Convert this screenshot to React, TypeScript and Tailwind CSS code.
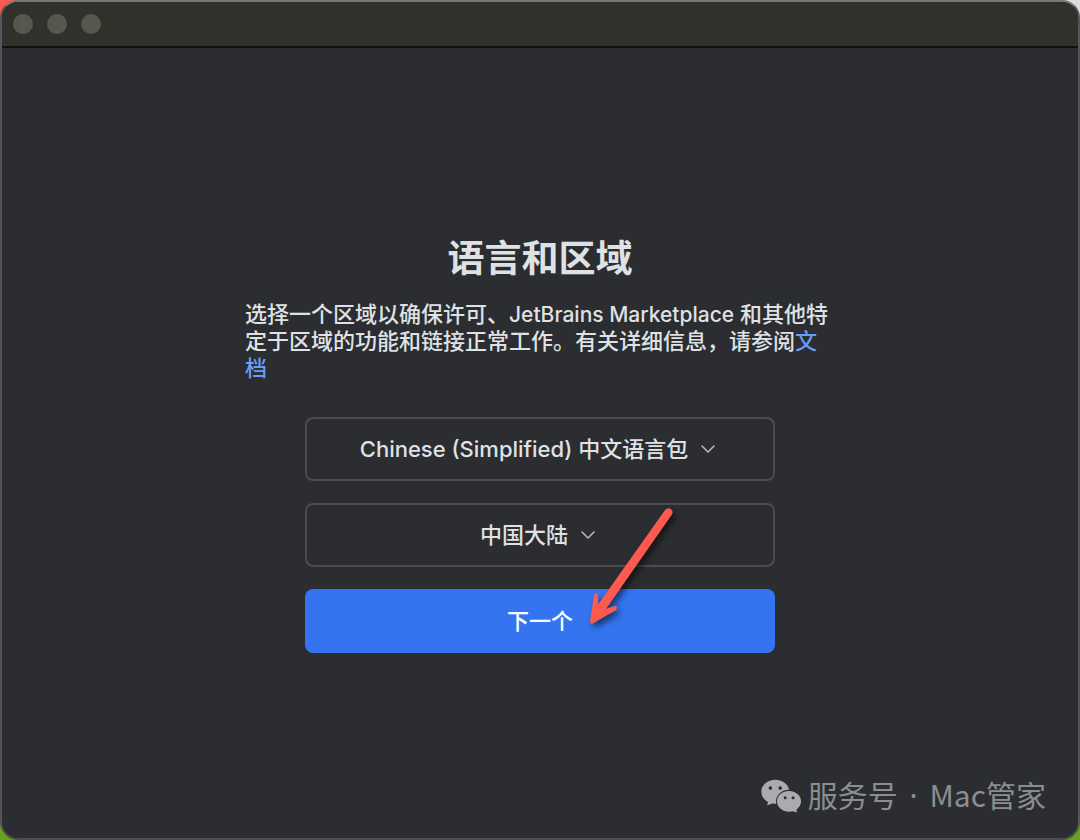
import React, { useState } from 'react';

type PickerProps = {
  id: string;
  label: string;
  options: string[];
};

const Picker: React.FC<PickerProps> = ({ id, label, options }) => {
  const [value, setValue] = useState(options[0]);

  return (
    <div className="flex h-16 w-full items-center justify-center gap-3 rounded-lg border-2 border-[#4b4c50] pr-1">
      <select
        id={id}
        aria-label={label}
        value={value}
        onChange={(e) => setValue(e.target.value)}
        className="appearance-none field-sizing-content bg-transparent leading-9 text-[#dfe1e5] outline-none cursor-pointer"
      >
        {options.map((option) => (
          <option key={option} className="bg-[#2b2d30]">{option}</option>
        ))}
      </select>
      <svg viewBox="0 0 16 16" className="size-4 shrink-0" fill="none" stroke="#b6b8bd" strokeWidth="1.6" strokeLinecap="round" strokeLinejoin="round" aria-hidden="true">
        <path d="M2 5l6 6 6-6" />
      </svg>
    </div>
  );
};

const TitleBar: React.FC = () => (
  <header className="flex h-[46px] shrink-0 items-center gap-[14px] border-b-2 border-[#0f0f10] bg-[#32302b] px-[11px]">
    <button aria-label="关闭" className="size-5 rounded-full bg-[#57564f]" />
    <button aria-label="最小化" className="size-5 rounded-full bg-[#57564f]" />
    <button aria-label="缩放" className="size-5 rounded-full bg-[#57564f]" />
  </header>
);

// Pointer arrow that lies over the form
const Pointer: React.FC = () => (
  <svg viewBox="0 0 100 130" className="pointer-events-none absolute bottom-[19px] left-[275px] h-[130px] w-[100px] overflow-visible drop-shadow-[3px_4px_3px_rgba(0,0,0,0.55)]" aria-hidden="true">
    <path
      d="M84.9 6.2 Q87.6 3 90.8 5 Q94 7.6 91.6 11 L26.2 104.8 L33.6 102.3 Q36.4 101.6 37 103.6 Q37.3 105.3 35.3 106.4 L12.8 119.4 Q9.8 120.4 10 117 L14 91.4 Q14.5 89.2 16.2 89.3 Q18.1 89.5 18.1 91.8 L18.3 100.3 Z"
      fill="#ff5a4d"
    />
  </svg>
);

const WeChatIcon: React.FC = () => (
  <svg viewBox="0 0 42 36" className="mt-1 h-9 w-[42px]" aria-hidden="true">
    <g fill="#a9abad">
      <ellipse cx="15.3" cy="12.7" rx="14" ry="12" />
      <path d="M8.5 21 L7.2 26.4 L14 23.4 Z" />
    </g>
    <ellipse cx="29" cy="22.3" rx="13" ry="11.5" fill="#2b2d30" />
    <g fill="#a9abad">
      <ellipse cx="29" cy="22.3" rx="12" ry="10.4" />
      <path d="M31 31.8 L37 33.6 L36 28.5 Z" />
    </g>
    <g fill="#2b2d30">
      <circle cx="10.4" cy="9.1" r="1.8" />
      <circle cx="20.2" cy="9.1" r="1.8" />
      <circle cx="25.2" cy="18.8" r="1.5" />
      <circle cx="33" cy="18.8" r="1.5" />
    </g>
  </svg>
);

const App: React.FC = () => {
  return (
    <div className="flex min-h-screen bg-[conic-gradient(#dcdcdc_25%,#67a51c_25%_75%,#ff5a4d_75%)] font-[Inter,'Noto_Sans_CJK_SC',sans-serif]">
      <div className="relative flex grow flex-col overflow-hidden rounded-[18px] border-2 border-t-[#777774] border-x-[#54555a] border-b-[#4d4e52] bg-[#2b2d30]">
        <TitleBar />

        <main className="flex grow flex-col items-center justify-center px-6 pt-1 text-[22px] leading-[27px] font-medium text-[#dfe1e5]">
          <h1 className="mb-5 text-[37px] leading-[44px] font-bold">语言和区域</h1>

          <p className="mb-[35px] w-full max-w-[590px]">
            选择一个区域以确保许可、<span className="text-[21px]">JetBrains Marketplace</span> 和其他特定于区域的功能和链接正常工作。有关详细信息，请参阅
            <a href="#docs" className="text-[#6b9bfa]">文档</a>
          </p>

          <form className="relative flex w-full max-w-[470px] flex-col gap-[22px]" onSubmit={(e) => e.preventDefault()}>
            <Picker id="language" label="语言" options={['Chinese (Simplified) 中文语言包', 'English']} />
            <Picker id="region" label="区域" options={['中国大陆', '亚洲']} />
            <button type="submit" className="h-16 w-full rounded-lg bg-[#3574f0] text-white cursor-pointer">
              下一个
            </button>
            <Pointer />
          </form>
        </main>

        <div className="absolute right-8 bottom-5 flex items-center gap-[6px] font-['Noto_Sans_CJK_SC',sans-serif] text-[30px] leading-[44px] text-[#8b8d90]">
          <WeChatIcon />
          <span>
            服务号<span className="px-1 font-['Noto_Sans']"> · </span>Mac管家
          </span>
        </div>
      </div>
    </div>
  );
};

export default App;
